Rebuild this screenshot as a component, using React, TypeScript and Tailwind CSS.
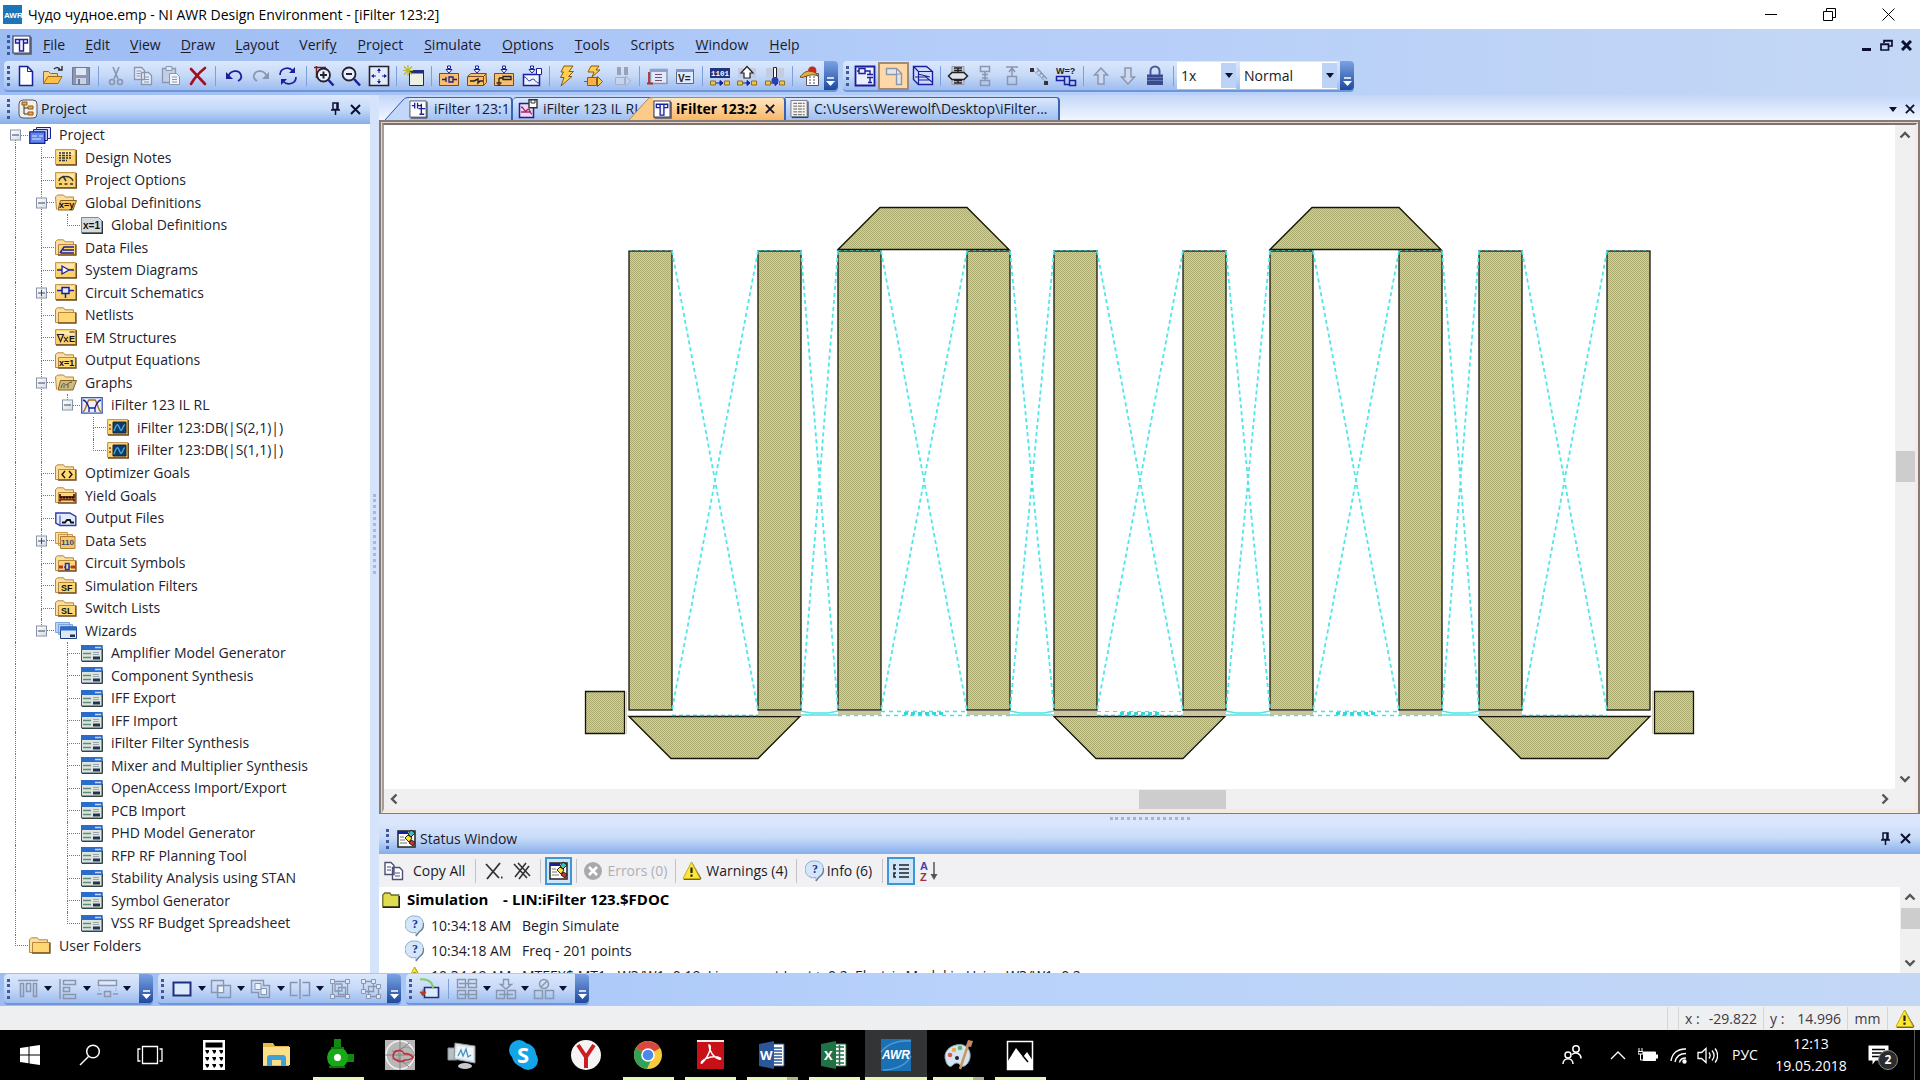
import React from "react";

type Kids = { children: React.ReactNode };

const navy = "#1a1f9c";
const gray = "#8a96ae";

/* ---------- generic svg frame for 22x22 toolbar glyphs ---------- */
function G({ children, w = 22, h = 22 }: Kids & { w?: number; h?: number }) {
  return (
    <svg width={w} height={h} viewBox={`0 0 ${w} ${h}`} fill="none" className="shrink-0" aria-hidden="true">
      {children}
    </svg>
  );
}

const DownMark = () => <path d="M11 8 8 4.500h6zM9.500 1h3v2.500h-3z" fill="#fff" stroke={navy} strokeWidth="1" />;
const Cells = () => (
  <>
    <path d="M1.500 16h5v4h-5zM15.500 16h5v4h-5z" fill="#f5c24a" stroke="#8a7020" />
    <path d="M7 18h6M11 15.500l3 2.500-3 2.500z" stroke={navy} fill={navy} />
  </>
);

const icon = {
  newDoc: <G><path d="M4.500 1.500h8l5 5v14h-13z" fill="#fff" stroke={navy} strokeWidth="1.500" /><path d="M12.500 1.500v5h5" stroke={navy} /></G>,
  open: <G><path d="M1.500 18.500v-12h5l2 2h7v3" fill="#f8d27a" stroke="#9a6a1a" /><path d="M1.500 18.500 6 11.500h14l-4 7z" fill="#ffc04a" stroke="#9a6a1a" /><path d="M12 4c2-2 5-2 6 1M16 5h4V1" stroke="#222" strokeWidth="1.300" /></G>,
  save: <G><path d="M2.500 2.500h17v17h-17z" fill="#8a96b4" stroke="#6c7896" /><path d="M6 3h10v7H6z" fill="#dfe6f4" /><path d="M6 13h10v6H6z" fill="#c8d2e6" /><path d="M8 14h2v5H8z" fill="#6c7896" /></G>,
  cut: <G><path d="M8 2 13 14M14 2 9 14" stroke={gray} strokeWidth="1.600" /><circle cx="7" cy="17" r="2.500" stroke={gray} strokeWidth="1.600" /><circle cx="15" cy="17" r="2.500" stroke={gray} strokeWidth="1.600" /></G>,
  copy: <G><path d="M2.500 2.500h7l3 3v9h-10zM9.500 7.500h7l3 3v9h-10z" fill="#e3eafa" stroke={gray} strokeWidth="1.300" /><path d="M4.500 6h5M4.500 8.500h4M4.500 11h4M12 12h5M12 14.500h5M12 17h5" stroke={gray} /></G>,
  paste: <G><path d="M2.500 3.500h13v14h-13z" fill="#c5cfe4" stroke={gray} strokeWidth="1.300" /><path d="M6 1.500h6v4H6z" fill="#dfe6f4" stroke={gray} /><path d="M9.500 8.500h7l3 3v8h-10z" fill="#eef3fc" stroke={gray} /><path d="M12 12h5M12 14.500h5M12 17h5" stroke={gray} /></G>,
  del: <G><path d="M4 4l14 15M18 3C13 7 8 12 4 19" stroke="#a01020" strokeWidth="2.600" strokeLinecap="round" /></G>,
  undo: <G><path d="M5 12C7 5 16 4 18 10c1 3-1 5-3 6" stroke={navy} strokeWidth="1.800" /><path d="M3 7v7h7z" fill={navy} /></G>,
  redo: <G><path d="M17 12C15 5 6 4 4 10c-1 3 1 5 3 6" stroke={gray} strokeWidth="1.800" /><path d="M19 7v7h-7z" fill={gray} /></G>,
  refresh: <G><path d="M3 10c0-7 9-9 13-4M19 12c0 7-9 9-13 4" stroke={navy} strokeWidth="1.700" /><path d="M18 2v6h-6zM4 20v-6h6z" fill={navy} /></G>,
  zoomIn: <G><path d="M1 2.500h12M3.500 1v12" stroke="#7a2020" strokeWidth="1.500" /><circle cx="10.500" cy="10" r="6.500" fill="#e9f0fc" stroke="#223" strokeWidth="1.800" /><path d="M7 10h7M10.500 6.500v7" stroke="#223" strokeWidth="2" /><path d="m15.500 15 5 5.500" stroke={navy} strokeWidth="2.500" /></G>,
  zoomOut: <G><circle cx="9" cy="9" r="6.500" fill="#e9f0fc" stroke="#223" strokeWidth="1.800" /><path d="M6 9h6" stroke="#223" strokeWidth="2" /><path d="m14 14 6 6.500" stroke={navy} strokeWidth="2.500" /></G>,
  fit: <G><path d="M1.500 1.500h19v19h-19z" fill="#e3ecfb" stroke="#223" strokeWidth="1.600" /><path d="M11 4v4M11 14v4M4 11h4M14 11h4" stroke={navy} /><path d="M9 6l2-3 2 3zM9 16l2 3 2-3zM6 9l-3 2 3 2zM16 9l3 2-3 2z" fill={navy} /></G>,
  newWin: <G><path d="M6.500 5.500h14v15h-14z" fill="#eef0e4" stroke={navy} /><path d="M6 5h15v3.500H6z" fill="#20307c" /><path d="M5 0v11M0 5.500h10M1 1.500l8 8M9 1.500l-8 8" stroke="#b8b828" strokeWidth="1.200" /></G>,
  addSch: <G><DownMark /><path d="M1.500 8.500h19v12h-19z" fill="#fbbf6a" stroke="#7a4a18" /><path d="M4 14.500h4M8 12v5M11 12h4v5h-4zM15 14.500h4" stroke={navy} strokeWidth="1.300" /></G>,
  addSys: <G><DownMark /><path d="M1.500 11.500 5 8.500h15l.5 9-3 3h-16z" fill="#fbbf6a" stroke="#7a4a18" /><path d="M2 11.500h15.500v9M17.500 11.500l3-3" stroke="#7a4a18" /><path d="M4 16h4l4-2v4l2-2h3" stroke="#222" strokeWidth="1.400" /></G>,
  addEm: <G><DownMark /><path d="M1.500 8.500h19v12h-19z" fill="#fbbf6a" stroke="#7a4a18" /><path d="M6 13v5M3.500 18h5M4.500 20h3M6 13h4M10 11.500h8v3h-8z" stroke="#222" strokeWidth="1.300" /></G>,
  addGraph: <G><DownMark /><path d="M2.500 9.500h16v11h-16z" fill="#eef3fc" stroke={navy} strokeWidth="1.500" /><path d="M3 12c4 0 3 6 7 3s4 3 8 3" stroke={navy} /><path d="M15.500 3.500h5v6h-5z" fill="#fff" stroke={navy} /></G>,
  bolt: <G><path d="M8 1h9l-4 5.500h4.500l-5 5H16L5 21l3-8.500H4.500L7.500 7H5z" fill="#ffcf52" stroke="#8a5a10" /></G>,
  boltRun: <G><path d="M8 1h8l-3 4h4l-8 7 2-5H5z" fill="#ffcf52" stroke="#8a5a10" /><path d="M4.500 12.500h9v8h-9z" fill="#fbb04a" stroke="#8a5a10" /><path d="m14.500 11.500 5 5-5 5zM1 16.500h3" fill="#ffc84a" stroke="#8a5a10" /></G>,
  boltPause: <G><path d="M6 2h4v8H6zM13 2h4v8h-4z" fill="#98a2b8" /><path d="M4.500 12.500h9v7h-9zM14.500 11l5 5-5 5z" fill="#c6d3ec" stroke="#a4b0c8" /></G>,
  probe: <G><path d="M4.500 4.500h16.500v14h-16.500z" fill="#dfe9fb" stroke={gray} strokeWidth="1.500" /><path d="M4 4h17v3H4z" fill="#8ba2d4" /><path d="M9 9.500h7M9 12.500h7M9 15.500h7" stroke="#7a5060" /><path d="M1 18.500h6M3 7v12" stroke="#b03030" strokeWidth="1.800" /></G>,
  veq: <G><path d="M2.500 4.500h17v14h-17z" fill="#dfe9fb" stroke="#5a6a94" /><path d="M2 4h17v3H2z" fill="#7d98d0" /><text x="4" y="16.500" fontSize="10" fontFamily="Liberation Sans" fontWeight="700" fill="#222">V=</text></G>,
  bits: <G><path d="M1 3h20v10H1z" fill="#22347c" /><text x="2" y="11" fontSize="7.500" fontFamily="Liberation Mono" fontWeight="700" fill="#fff">1101</text><Cells /></G>,
  upArr: <G><path d="M2 3h18v10H2z" fill="#c3cce0" /><path d="M11 1.500 5 8h3v5h6V8h3z" fill="#fff" stroke="#222" strokeWidth="1.200" /><Cells /></G>,
  thermo: <G><path d="M2 3h18v10H2z" fill="#c3cce0" /><Cells /><path d="M9.500 2.500h3v10h-3z" fill="#fff" stroke="#222" /><circle cx="11" cy="15.500" r="3.500" fill="#2840b4" /></G>,
  calHat: <G><path d="M7.500 8.500h12v12h-12z" fill="#fff" stroke="#556" /><path d="M10 12h2M14 12h2M10 15h2M14 15h2M10 18h2M14 18h2" stroke="#889" strokeWidth="1.500" /><path d="M1 12c3-4 6-6 10-6s6 2 8 5c-5-2-8-1-11 0s-5 2-7 1z" fill="#e0b040" stroke="#6a4a10" /><path d="M9 6c0-3 2-5 5-4.500S18 5 17 8z" fill="#c42a20" /></G>,
  lay2d: <G><path d="M1.500 1.500h19v19h-19z" fill="#e9effc" stroke={navy} strokeWidth="1.800" /><path d="M3 6h2M5 3.500h6v5H5zM11 6h5v3M13 9.500h6M13 12.500h6M16 12.500v5M14 17.500h4" stroke={navy} strokeWidth="1.400" /></G>,
  view2d: <G><path d="M3.500 3.500h10l5 5v11h-5v-10h-10z" fill="#e6e4e2" stroke={gray} strokeWidth="1.400" /><path d="M13.500 3.500v6M13.500 9.500l5-1" stroke={gray} /></G>,
  view3d: <G><path d="M1.500 1.500h13l6 5v13h-14l-5-5z" fill="#cfdcf8" stroke={navy} strokeWidth="1.400" /><path d="M1.500 1.500l5 5v13M6.500 6.500h14M3 12h11l6 5M6 15h12M6 9l12 3" stroke={navy} strokeWidth="1.200" /></G>,
  cutPlane: <G><path d="M5 1.500h12v18H5z" fill="#c6ccd8" stroke="#99a" /><path d="M7 3h8M11 3v5M7 5.500h8M7 15.500h8M11 14v4M7 18h8" stroke="#222" strokeWidth="1.400" /><path d="M1.500 11 5 7.500h12l3.500 3.500-3.500 3.500H5z" fill="#dfe4ec" stroke="#222" strokeWidth="1.500" /></G>,
  spread: <G><path d="M6.500 1.500h9v5h-9zM6.500 15.500h9v5h-9zM11 7v8M8 9.500h6M8 13h6" stroke={gray} strokeWidth="1.500" /></G>,
  rise: <G><path d="M6.500 11.500h9v8h-9zM5 2h12M11 3v8M8 7l3-4 3 4" stroke={gray} strokeWidth="1.500" /></G>,
  ruler: <G><path d="M2 3h4v4H2zM16 16h4v4h-4z" fill="#333" /><path d="M6 6l11 10" stroke={gray} strokeDasharray="1 1" strokeWidth="1.500" /><path d="m9 3 10 11M11 5 9 7M13.500 8l-2 2M16 11l-2 2" stroke={gray} strokeWidth="1.300" /></G>,
  weq: <G><text x="1" y="9" fontSize="9" fontFamily="Liberation Sans" fontWeight="700" fill="#222">W=?</text><path d="M1.500 11.500h8v4h-8zM9.500 11.500h5v8h-5zM14.500 15.500h6v5h-6z" stroke={navy} strokeWidth="1.500" /></G>,
  up: <G><path d="M11 3 4.500 10H8v9h6v-9h3.500z" fill="#cdd9f0" stroke={gray} strokeWidth="1.500" /></G>,
  down: <G><path d="M11 19 4.500 12H8V3h6v9h3.500z" fill="#cdd9f0" stroke={gray} strokeWidth="1.500" /></G>,
  lock: <G><path d="M6.500 10V6a4.500 4.500 0 0 1 9 0v4" stroke="#4a5a94" strokeWidth="2" /><path d="M3 9.500h16V20H3z" fill="#3b4b90" /><path d="M3 12.500h16M3 15.500h16" stroke="#6676b0" /></G>,
  alignTop: <G><path d="M1 2.500h20M3.500 5.500h3v13h-3zM9.500 5.500h4v8h-4zM16.500 5.500h3v13h-3z" stroke={gray} strokeWidth="1.600" /></G>,
  alignLeft: <G><path d="M3 1v20M6.500 2.500h12v4h-12zM6.500 9.500h6v4h-6zM6.500 16.500h12v4h-12z" stroke={gray} strokeWidth="1.500" /></G>,
  distrib: <G><path d="M2.500 2.500h18v5h-18z" fill="#dfe9fb" stroke={gray} strokeWidth="1.500" /><path d="M8.500 13.500h6v5h-6zM1 16h5M17 16h5" stroke={gray} strokeWidth="1.500" /><path d="M3 10v3M20 10v3" stroke={gray} strokeDasharray="1 1" /></G>,
  rect: <G><path d="M2.500 4.500h17v13h-17z" fill="#dcebfb" stroke="#20307c" strokeWidth="2" /></G>,
  overlap: <G><path d="M1.500 2.500h12v12h-12zM7.500 7.500h13v12h-13z" stroke={gray} strokeWidth="1.400" /><path d="M8 8h5.500v6.500H8z" fill="#eef4fe" stroke={gray} /></G>,
  union: <G><path d="M1.500 2.500h12v5h6v12h-11v-5h-7z" stroke={gray} strokeWidth="1.400" /><path d="M5 5.500h6v6H5zM11 10.500h5.500v6H11z" fill="#eef4fe" stroke={gray} /></G>,
  mirror: <G><path d="M8.500 4.500h-7v13h7M13.500 4.500h7v13h-7M11 1v20" stroke={gray} strokeWidth="1.500" /></G>,
  group: <G><path d="M3.500 3.500h15v15h-15zM6 6h7v7H6zM9.500 9.500h7v7h-7z" stroke={gray} strokeWidth="1.300" /><path d="M1.500 1.500h4v4h-4zM16.500 1.500h4v4h-4zM1.500 16.500h4v4h-4zM16.500 16.500h4v4h-4z" fill="#dfe9fb" stroke={gray} /></G>,
  ungroup: <G><path d="M3.500 3.500h10v10h-10zM8.500 8.500h10v10h-10z" stroke={gray} strokeWidth="1.300" /><path d="M1.500 1.500h4v4h-4zM11.500 1.500h4v4h-4zM1.500 11.500h4v4h-4zM16.500 6.500h4v4h-4zM6.500 16.500h4v4h-4zM16.500 16.500h4v4h-4z" fill="#dfe9fb" stroke={gray} /></G>,
  rotate: <G><path d="M6.500 9.500h14v10h-14z" fill="#dcebfb" stroke="#20307c" strokeWidth="1.600" /><path d="M2 1.500c8-1 13 3 13 9" stroke="#7ccf60" strokeWidth="2" /><path d="M2 14h6l-3 4z" fill="#b04020" stroke="#b04020" /><path d="M5 11v4" stroke="#b04020" /></G>,
  array: <G><path d="M1.500 1.500h8v8h-8zM12.500 1.500h8v8h-8zM1.500 12.500h8v8h-8zM12.500 12.500h8v8h-8zM3 5.500h17M3 16.500h17" stroke={gray} strokeWidth="1.400" /></G>,
  snap: <G><path d="M8.500 1.500h5v5h3L11 11 5.500 6.500h3zM1.500 12.500h8v8h-8zM12.500 12.500h8v8h-8zM4 16.500h14" stroke={gray} strokeWidth="1.400" /></G>,
  noSnap: <G><circle cx="11" cy="6" r="4.500" stroke={gray} strokeWidth="1.600" /><path d="M8 9l6-6M1.500 12.500h8v8h-8zM12.500 12.500h8v8h-8z" stroke={gray} strokeWidth="1.500" /></G>,
};

/* ---------- toolbar pieces ---------- */
function Grip() {
  return (
    <span className="flex w-2 shrink-0 items-center justify-center self-stretch">
      <span className="h-5 border-l-[3px] border-dotted border-[#40599a]" />
    </span>
  );
}
const Sep = () => <span className="flex w-2 shrink-0 justify-center"><span className="h-5 w-px bg-[#7d9fdc]" /></span>;
const Caret = () => (
  <svg width="8" height="5" viewBox="0 0 8 5" aria-hidden="true" className="shrink-0"><path d="M0 0h8L4 5z" fill="#0c1030" /></svg>
);
function Overflow() {
  return (
    <button aria-label="Toolbar options" className="flex w-[14px] shrink-0 flex-col items-center justify-end self-stretch rounded-r bg-gradient-to-b from-[#7ba2e4] to-[#1e4a9e] pb-1">
      <svg width="9" height="9" viewBox="0 0 9 9" aria-hidden="true"><path d="M1 1h7" stroke="#fff" strokeWidth="1.500" /><path d="M0 4h9L4.500 9z" fill="#fff" /></svg>
    </button>
  );
}
function Tool({ name, children, on }: Kids & { name: string; on?: boolean }) {
  return (
    <button
      aria-label={name}
      title={name}
      className={
        on
          ? "flex h-[28px] min-w-0 flex-1 items-center justify-center border-2 border-[#a08a78] bg-[#ffd8a8]"
          : "flex h-[28px] min-w-0 flex-1 items-center justify-center"
      }
    >
      {children}
    </button>
  );
}
function Bar({ children, className }: Kids & { className: string }) {
  return (
    <div role="toolbar" className={`flex h-[31px] shrink-0 items-center rounded border-b-2 border-[#6f96d8] bg-gradient-to-b from-[#dbe8fd] via-[#c6d9f8] to-[#9dbcf0] ${className}`}>
      {children}
    </div>
  );
}
function DropDown({ label, value, className }: { label: string; value: string; className: string }) {
  return (
    <div className={`flex h-[27px] shrink-0 bg-white ${className}`}>
      <select aria-label={label} defaultValue={value} className="h-full min-w-0 flex-1 appearance-none bg-transparent pl-1 text-sm text-[#181828] outline-none">
        <option>{value}</option>
      </select>
      <span className="my-px flex w-[15px] items-center justify-center bg-[#bcd2f6]"><Caret /></span>
    </div>
  );
}

/* ---------- menu ---------- */
const menus: [string, number][] = [
  ["File", 0], ["Edit", 0], ["View", 0], ["Draw", 0], ["Layout", 0], ["Verify", 5], ["Project", 0],
  ["Simulate", 0], ["Options", 0], ["Tools", 0], ["Scripts", -1], ["Window", 0], ["Help", 0],
];

const LayoutDoc = ({ s = 20 }: { s?: number }) => (
  <svg width={s} height={s} viewBox="0 0 20 20" fill="none" aria-hidden="true" className="shrink-0">
    <path d="M1 1h17v17H1z" fill="#fff" stroke="#33406c" strokeWidth="1.200" />
    <path d="M19 2v17H2" stroke="#556" strokeWidth="1.500" />
    <path d="M3.500 4.500h12v3.500h-4v8h-4V8h-4zM7.500 5v3M11.500 5v3" stroke={navy} strokeWidth="1.400" fill="#eef2ff" />
  </svg>
);

/* ---------- tree ---------- */
const TI = ({ children }: Kids) => (
  <svg width="22" height="17" viewBox="0 0 22 17" fill="none" className="shrink-0" aria-hidden="true">{children}</svg>
);
const Card = ({ children, fill = "#fbd36e" }: { children?: React.ReactNode; fill?: string }) => (
  <TI>
    <path d="M.5.5h20v15H.5z" fill={fill} stroke="#c89a50" />
    <path d="M1 16h20.500V1" stroke="#6a4a20" strokeWidth="1.400" />
    <path d="M2 2h17v4H2z" fill="#fff" opacity=".45" />
    {children}
  </TI>
);
const Fold = ({ children }: { children?: React.ReactNode }) => (
  <TI>
    <path d="M.5 15.500V2.500L2.500.8h6L10 2.800h8.500v12.700z" fill="#f9dfa0" stroke="#b8863c" />
    <path d="M3.500 15.500v-10h17v10z" fill="#ffd873" stroke="#b8863c" />
    <path d="M3 16.200h18V5.500" stroke="#6a4a20" strokeWidth="1.300" />
    {children}
  </TI>
);
const OpenFold = ({ children, tone = "#f6c95a" }: { children?: React.ReactNode; tone?: string }) => (
  <TI>
    <path d="M1.500 15.500.5 3l2-2h6l2 2h8v3" fill="#f9dfa0" stroke="#b8863c" />
    <path d="M3 16 5.500 6.500h16L18 16z" fill={tone} stroke="#8a5f24" />
    {children}
  </TI>
);
const T = ({ x, y = 13, s = 9, children, fill = "#111" }: Kids & { x: number; y?: number; s?: number; fill?: string }) => (
  <text x={x} y={y} fontSize={s} fontFamily="Liberation Sans" fontWeight="700" fill={fill}>{children}</text>
);
const WizIcon = () => (
  <TI>
    <path d="M.5.5h20.500v15.500H.5z" fill="#dfe4dc" stroke="#33507c" />
    <path d="M0 0h21.500v5H0z" fill="#2a6ccc" />
    <path d="M14 2.500h6" stroke="#bcd8ff" strokeWidth="1.500" />
    <path d="M2 8.500h8M2 12.500h8" stroke="#5c8a7c" strokeWidth="1.500" />
    <path d="M12 7.500h6M12 9.500h6" stroke="#99a5b0" />
    <path d="M12 11.500h7v3h-7z" fill="#22344c" />
    <path d="M21.500 4v12.500H1" stroke="#344" />
  </TI>
);
const MeasIcon = () => (
  <Card>
    <path d="M6 3h13v11H6z" fill="#123a6c" stroke="#222" />
    <path d="M7 12c3-9 4-7 6-2s3-5 5-4" stroke="#3fb0e0" strokeWidth="1.300" />
    <path d="M3 5v2M3 9v2" stroke="#a04020" strokeWidth="1.500" />
  </Card>
);

type Node = { label: string; icon: React.ReactNode; box?: "+" | "-"; kids?: Node[] };

const wizards = [
  "Amplifier Model Generator", "Component Synthesis", "IFF Export", "IFF Import", "iFilter Filter Synthesis",
  "Mixer and Multiplier Synthesis", "OpenAccess Import/Export", "PCB Import", "PHD Model Generator",
  "RFP RF Planning Tool", "Stability Analysis using STAN", "Symbol Generator", "VSS RF Budget Spreadsheet",
];

const tree: Node[] = [
  {
    label: "Project", box: "-",
    icon: <TI><path d="M7.500.5h14v11h-14z" fill="#dfe6fb" stroke={navy} /><path d="M4.500 2.500h14v11h-14z" fill="#bccbf6" stroke={navy} /><path d="M.8 4.800h15v11.500H.8z" fill="#5f86ea" stroke={navy} strokeWidth="1.300" /><path d="M3 9h5M3 12h9M10 9h4" stroke="#dfe8ff" /></TI>,
    kids: [
      { label: "Design Notes", icon: <Card><path d="M4 4h12M4 6.500h12M4 9h12M4 11.500h8" stroke="#333" strokeWidth="1.300" strokeDasharray="2 1 3 1" /></Card> },
      { label: "Project Options", icon: <Card><path d="M4 9c1-6 12-6 14 0" stroke="#333" strokeWidth="1.300" /><path d="M11 9 8 4M4 12h3M9.500 12h3M15 12h3" stroke="#333" strokeWidth="1.500" /></Card> },
      { label: "Global Definitions", box: "-", icon: <OpenFold><T x={4} y={14}>x=y</T></OpenFold>, kids: [
        { label: "Global Definitions", icon: <TI><path d="M.5.5h17l3.500 3.500v12H.5z" fill="#d6dade" stroke="#888" /><path d="M1 16.200h20.500V4" stroke="#333" strokeWidth="1.400" /><T x={2} y={12} s={10}>x=1</T></TI> },
      ] },
      { label: "Data Files", icon: <Fold><path d="M5 14 9 8h10M8 11h11M6 14h13" stroke={navy} strokeWidth="1.500" /></Fold> },
      { label: "System Diagrams", icon: <Card><path d="M2 8h5M7 4v8l7-4zM14 8h5" stroke={navy} strokeWidth="1.300" fill="#fff" /></Card> },
      { label: "Circuit Schematics", box: "+", icon: <Card><path d="M2 6.500h5M14 6.500h5M7 3.500h7v6H7zM10.500 9.500V14" stroke={navy} strokeWidth="1.500" fill="#dfe8ff" /></Card> },
      { label: "Netlists", icon: <Fold /> },
      { label: "EM Structures", icon: <Card><path d="M2.500 5.500h6l-3 7z" stroke="#222" strokeWidth="1.200" /><path d="m9 8 4 5M13 8l-4 5M14.500 3h5" stroke="#222" strokeWidth="1.200" /><T x={14} y={13} s={9}>E</T></Card> },
      { label: "Output Equations", icon: <Fold><T x={4} y={14}>x=1</T></Fold> },
      { label: "Graphs", box: "-", icon: <OpenFold tone="#cdbb7c"><path d="M6 14c2-8 4-3 5-3s3-3 6-3M9 14v-3M13 14v-4" stroke="#555" /></OpenFold>, kids: [
        { label: "iFilter 123 IL RL", box: "-", icon: <TI><path d="M.7.700h20.500v15.500H.7z" fill="#eaf0fd" stroke="#3c58b4" strokeWidth="1.300" /><path d="M2 15C5 13 6 4 8 3h6c2 1 3 10 6 12" stroke="#a8701c" strokeWidth="1.400" /><path d="M2 3c4 1 5 5 6 8v4M20 3c-4 1-5 5-6 8v4M8 11h6" stroke={navy} strokeWidth="1.300" /></TI>, kids: [
          { label: "iFilter 123:DB(|S(2,1)|)", icon: <MeasIcon /> },
          { label: "iFilter 123:DB(|S(1,1)|)", icon: <MeasIcon /> },
        ] },
      ] },
      { label: "Optimizer Goals", icon: <Fold><path d="m10 7-3 3.500 3 3.500M14 7l3 3.500-3 3.500" stroke="#111" strokeWidth="1.300" /></Fold> },
      { label: "Yield Goals", icon: <Fold><path d="M5 7v3h14V7M5 14.500v-2h14v2" stroke="#7a2a10" strokeWidth="2" /><path d="M5 10.500h14" stroke="#111" strokeWidth="2" strokeDasharray="2 1" /></Fold> },
      { label: "Output Files", icon: <TI><path d="M.8 13V3h14l6 3.500v9H5z" fill="#e3ebfd" stroke="#2a3fa8" strokeWidth="1.400" /><path d="M7 12.500h3l2-2.500h3l1 2.500h3" stroke="#111" strokeWidth="1.800" /><path d="M5 5.500v10" stroke="#2a3fa8" /></TI> },
      { label: "Data Sets", box: "+", icon: <TI><path d="M.5.5h12v11H.5zM3.500 2.500h14v11h-14z" fill="#fbe0a0" stroke="#c8944c" /><path d="M5.500 4.500h14.500v12H5.500z" fill="#f7c766" stroke="#b07a30" /><T x={6} y={13} s={8} fill="#2a4a7c">110</T></TI> },
      { label: "Circuit Symbols", icon: <Fold><path d="M4 10.500h4v3H4zM16 10.500h4v3h-4z" fill="#c03020" /><path d="M9 12h1.500M14 12h1.500M10.500 8.500h3.500v6h-3.500z" stroke="#2030c0" strokeWidth="1.500" /></Fold> },
      { label: "Simulation Filters", icon: <Fold><T x={6} y={14}>SF</T></Fold> },
      { label: "Switch Lists", icon: <Fold><T x={6} y={14}>SL</T></Fold> },
      { label: "Wizards", box: "-", icon: <TI><path d="M.5.5h14v10H.5zM3.500 2.500h14v10h-14z" fill="#b9d2f6" stroke="#7fa6dc" /><path d="M5.500 5h16v11.500h-16z" fill="#dfe8f4" stroke="#1d3f80" /><path d="M5 4.500h16.500v4H5z" fill="#2a6ccc" /><path d="M15 12.500h5v2.500h-5z" fill="#22344c" /></TI>,
        kids: wizards.map((label) => ({ label, icon: <WizIcon /> })) },
    ],
  },
  { label: "User Folders", icon: <Fold /> },
];

type Row = { node: Node; guides: boolean[]; first: boolean; last: boolean };
function flatten(nodes: Node[], guides: boolean[], out: Row[]): Row[] {
  nodes.forEach((node, i) => {
    const last = i === nodes.length - 1;
    out.push({ node, guides, first: i === 0 && guides.length === 0, last });
    if (node.kids) flatten(node.kids, [...guides, !last], out);
  });
  return out;
}
const rows = flatten(tree, [], []);

function TreeRow({ node, guides, first, last }: Row) {
  return (
    <li className="flex min-h-0 flex-1 items-center">
      {guides.map((g, i) => (
        <span key={i} className="flex w-[26px] shrink-0 self-stretch pl-[13px]">
          {g && <span className="border-l border-dotted border-[#777]" />}
        </span>
      ))}
      <span className="relative flex w-[26px] shrink-0 flex-col self-stretch pl-[13px]">
        <span className={first ? "flex-1 border-b border-dotted border-[#777]" : "flex-1 border-b border-l border-dotted border-[#777]"} />
        <span className={last ? "flex-1" : "flex-1 border-l border-dotted border-[#777]"} />
        {node.box && (
          <button
            aria-label={`${node.box === "-" ? "Collapse" : "Expand"} ${node.label}`}
            className="absolute top-1/2 left-2 flex h-[11px] w-[11px] -translate-y-1/2 items-center justify-center border border-[#8793a5] bg-gradient-to-br from-white to-[#d8dde4]"
          >
            <svg width="7" height="7" viewBox="0 0 7 7" aria-hidden="true"><path d={node.box === "-" ? "M0 3.500h7" : "M0 3.500h7M3.500 0v7"} stroke="#3a4660" /></svg>
          </button>
        )}
      </span>
      <span className="flex items-center gap-2 pl-px">
        {node.icon}
        <span className="text-sm leading-5 whitespace-nowrap text-[#222230]">{node.label}</span>
      </span>
    </li>
  );
}

const Pin = () => (
  <svg width="11" height="14" viewBox="0 0 11 14" fill="none" aria-hidden="true"><path d="M3 1h5v6.500H3zM7 1v6.500M1 8h9M5.500 8v5" stroke="#0c1030" strokeWidth="1.500" /></svg>
);
const Cross = ({ s = 11, w = 2 }: { s?: number; w?: number }) => (
  <svg width={s} height={s} viewBox="0 0 11 11" fill="none" aria-hidden="true"><path d="m1 1 9 9M10 1l-9 9" stroke="#0c1030" strokeWidth={w} /></svg>
);

/* ---------- layout view ---------- */
const columns: [number, number][] = [
  [629, 672], [758, 801], [838, 881], [967, 1010], [1054, 1097], [1183, 1226], [1270, 1313], [1399, 1442], [1479, 1522], [1607, 1650],
];
function FilterLayout() {
  return (
    <svg viewBox="384 125 1511 664" className="h-full w-full" fill="none" role="img" aria-label="iFilter 123 layout">
      <defs>
        <pattern id="metal" width="2" height="2" patternUnits="userSpaceOnUse">
          <path d="M0 0h2v2H0z" fill="#d2d192" />
          <path d="M0 0h1v1H0zM1 1h1v1H1z" fill="#adac70" />
        </pattern>
      </defs>
      <g fill="url(#metal)" stroke="#15150c" strokeWidth="1.300">
        <path d="M585.500 691.500h39v42h-39zM1654.500 691.500h39v42h-39z" />
        {columns.map(([a, b]) => <rect key={a} x={a} y={251} width={b - a} height={459} />)}
        {[838, 1270].map((x) => <path key={x} d={`M${x} 249.500l42-42h87l42 42z`} />)}
        {[629, 1054, 1479].map((x) => <path key={x} d={`M${x} 716.500l42 42h87l42-42z`} />)}
      </g>
      <path d="M626.500 691v43M1652.500 691v43" stroke="#d9d2bd" />
      {columns.map(([a, b], i) => i > 0 && i < 9 && <path key={a} d={`M${a} 713h${b - a}`} stroke="#cfc4a0" strokeWidth="4" />)}
      {columns.slice(0, -1).map(([, b], i) => {
        const n = columns[i + 1][0];
        return <path key={b} d={`M${b} 251 ${n} 710M${n} 251 ${b} 710`} stroke="#4fe6e8" strokeWidth="1.800" strokeDasharray="4 3" />;
      })}
      {columns.map(([a, b]) => <path key={a} d={`M${a} 250.500h${b - a}`} stroke="#3fa9a0" strokeDasharray="3 3" />)}
      {[[672, 758], [1097, 1183], [1522, 1607]].map(([a, b]) => <path key={a} d={`M${a} 715.500h${b - a}`} stroke="#26b8b4" strokeWidth="1.500" strokeDasharray="4 3" />)}
      {[[801, 838], [1010, 1054], [1226, 1270], [1442, 1479]].map(([a, b]) => (
        <path key={a} d={`M${a} 715h${b - a}M${a} 711l10 2h${b - a - 20}l10-2`} stroke="#52e4e6" strokeWidth="1.500" />
      ))}
      {[[838, 1010], [1270, 1442]].map(([a, b]) => (
        <g key={a}>
          <path d={`M${a} 715.500h${b - a}M${a + 43} 711.500h86`} stroke="#4ddfe0" strokeWidth="1.300" strokeDasharray="4 4" />
          <path d={`M${a + 66} 713.500h40`} stroke="#34d6da" strokeWidth="3" strokeDasharray="4 3" />
        </g>
      ))}
      <path d="M1097 711.500h86" stroke="#4ddfe0" strokeDasharray="4 4" />
      <path d="M1120 713.500h40" stroke="#34d6da" strokeWidth="3" strokeDasharray="4 3" />
    </svg>
  );
}

const Chev = ({ d }: { d: string }) => (
  <svg width="12" height="12" viewBox="0 0 12 12" fill="none" aria-hidden="true"><path d={d} stroke="#555" strokeWidth="2.400" /></svg>
);
const chUp = "M1.500 8.500 6 4l4.500 4.500";
const chDown = "M1.500 3.500 6 8l4.500-4.500";
const chLeft = "M8.500 1.500 4 6l4.500 4.500";
const chRight = "M3.500 1.500 8 6l-4.500 4.500";

/* ---------- tabs ---------- */
function Slant({ active }: { active?: boolean }) {
  return (
    <svg width="24" height="23" viewBox="0 0 24 23" fill="none" aria-hidden="true" className="shrink-0">
      <path d="M0 23 18 3c2-2 3-2.500 6-2.500V23z" fill={active ? "#fccb8a" : "#c3d8f9"} />
      <path d="M0 23 18 3c2-2 3-2.500 6-2.500" stroke={active ? "#b08850" : "#2f57a8"} />
    </svg>
  );
}
const tabBase = "flex h-[23px] items-center rounded-tr border-t border-r-2 border-[#3a62b4] bg-gradient-to-b from-[#dbe8fd] to-[#9fc0f2] text-sm text-[#1a1a2c] whitespace-nowrap ";

const InfoMark = () => (
  <svg width="20" height="22" viewBox="0 0 20 22" fill="none" aria-hidden="true" className="shrink-0">
    <path d="M10 1a8.500 8.500 0 0 1 4 16L11 21v-3.500A8.500 8.500 0 1 1 10 1z" fill="#d3e6fa" stroke="#8fb0d4" />
    <path d="M18.400 8c.5 4-1 7-4.400 9L11 21" stroke="#6a8098" strokeWidth="1.300" />
    <text x="7" y="13" fontSize="12" fontWeight="700" fontFamily="Liberation Serif" fill="#1c2fa0">?</text>
  </svg>
);
const WarnMark = () => (
  <svg width="20" height="20" viewBox="0 0 20 20" fill="none" aria-hidden="true" className="shrink-0">
    <path d="M10 1 19.500 17.500 18 19H2L1 17.500z" fill="#6a6430" />
    <path d="M9.500 1 18 17.500H1z" fill="#ffe92e" stroke="#c8b01c" strokeLinejoin="round" />
    <path d="M9.500 6.500v5.500M9.500 13.500v2.200" stroke="#222" strokeWidth="2.200" />
  </svg>
);
const StatusGlyph = () => (
  <svg width="20" height="20" viewBox="0 0 20 20" fill="none" aria-hidden="true" className="shrink-0">
    <path d="M1 2h17v16H1z" fill="#fff" stroke="#222" strokeWidth="1.500" /><path d="M1 2h10v3H1z" fill={navy} />
    <path d="M3 8h4M3 11h5M3 14h7" stroke="#777" />
    <path d="m14 1 4 3-4 4-3-3z" fill="#3fc0b8" stroke="#222" /><path d="m11 6 4 3-3 4-4-4z" fill="#ffe13c" stroke="#222" /><path d="m14 11 4 2-2 4-4-3z" fill="#d03030" stroke="#222" />
  </svg>
);

/* ---------- taskbar ---------- */
const TB = ({ children }: Kids) => (
  <svg width="32" height="32" viewBox="0 0 32 32" fill="none" aria-hidden="true">{children}</svg>
);
const Office = ({ c, l, grid }: { c: string; l: string; grid?: boolean }) => (
  <TB>
    <path d="M15 5h13v22H15z" fill="#fff" stroke={c} />
    <path d={grid ? "M17 8h9M17 12h9M17 16h9M17 20h9M17 24h9M21.500 6v20" : "M18 9h8M18 12h8M18 15h8M18 18h8M18 21h8M18 24h8"} stroke={c} strokeWidth="1.500" />
    <path d="M3 5 18 2v28L3 27z" fill={c} />
    <text x={grid ? 6 : 4} y="21" fontSize="13" fontWeight="700" fontFamily="Open Sans" fill="#fff">{l}</text>
  </TB>
);
const apps: { name: string; line?: "full" | "split" | "active"; icon: React.ReactNode }[] = [
  { name: "Calculator", icon: <TB><path d="M5 1h22v30H5z" fill="#fff" /><path d="M7.500 3.500h17v5h-17z" fill="#000" /><path d="M7 11h4v2l-2 2zM14 11h4v2l-2 2zM21 11h4v2l-2 2zM7 18h4v2l-2 2zM14 18h4v2l-2 2zM21 18h4v2l-2 2zM7 25h4v2l-2 2zM14 25h4v2l-2 2zM21 25h4v2l-2 2z" fill="#000" /></TB> },
  { name: "File Explorer", icon: <TB><path d="M3 4h10l2 3h14v20H3z" fill="#e9b94c" /><path d="M3 8h27v18H3z" fill="#fbe08c" /><path d="M7 27V19c0-2 1-3 3-3h13c2 0 3 1 3 3v8h-5v-6h-9v6z" fill="#3fa0d8" /></TB> },
  { name: "Network client", line: "full", icon: <TB><path d="M12 0h7v9h-7zM23 15h9v8h-9z" fill="#128a12" /><circle cx="15.500" cy="18.500" r="10.500" fill="#18a818" /><path d="M9 9h13M7 28h16" stroke="#0c780c" strokeWidth="2" /><circle cx="15.500" cy="18.500" r="3.500" fill="#fff" /></TB> },
  { name: "Smith chart", icon: <TB><path d="M1 1h30v30H1z" fill="#b9b6b8" /><circle cx="16" cy="16" r="14" stroke="#f0f0f0" strokeWidth="1.500" /><circle cx="22" cy="16" r="8" stroke="#9a9698" /><path d="M1 16h30M16 1v30M25 4c-6 5-10 9-17 8M25 28c-6-5-10-9-17-8" stroke="#858183" /><path d="M9 18c0-8 10-8 11-3M9 18c2 4 8 6 12 3 4 0 7-1 8-3-3-3-6-4-9-3" stroke="#c42a34" strokeWidth="1.600" /></TB> },
  { name: "System monitor", icon: <TB><path d="M2 9h9v12H2z" fill="#b8c0c4" stroke="#8a9298" /><path d="m9 4 20 3v17L8 20z" fill="#dfe4e8" stroke="#8a9298" /><path d="m11 7 16 2v12l-17-3z" fill="#eef6fc" /><path d="M12 17l3-6 2 6 3-7 2 8 3-2" stroke="#4a90c0" strokeWidth="1.300" /><ellipse cx="19" cy="27" rx="7" ry="3" fill="#c3c9cc" /></TB> },
  { name: "Skype", icon: <TB><circle cx="11" cy="11" r="10" fill="#12a5e8" /><circle cx="20" cy="21" r="10" fill="#12a5e8" /><circle cx="16" cy="16" r="12" fill="#12a5e8" /><text x="9" y="24" fontSize="22" fontWeight="700" fontFamily="Open Sans" fill="#fff">S</text></TB> },
  { name: "Yandex", icon: <TB><circle cx="16" cy="16" r="15" fill="#f4f4f4" /><path d="M8 6 16 18 24 6M16 17v12" stroke="#c81e24" strokeWidth="4" /></TB> },
  { name: "Chrome", line: "full", icon: <TB><circle cx="16" cy="16" r="14" fill="#f6cb3c" /><path d="M16 16 3.900 9A14 14 0 0 1 28.100 9z" fill="#d8483c" /><path d="M16 16 3.900 9A14 14 0 0 0 15 30l4-9z" fill="#33a058" /><path d="M16 9h12.100l-3-4H16z" fill="#d8483c" /><circle cx="16" cy="16" r="6.800" fill="#fff" /><circle cx="16" cy="16" r="5.300" fill="#4a88ec" /></TB> },
  { name: "Acrobat Reader", line: "full", icon: <TB><path d="M3 1h27v29H3z" fill="#c81018" /><path d="M3 1h27v2H3z" fill="#eee" /><path d="M15 6c3 0 1 10-7 18-2 1 0-4 9-6 9-1 12 3 8 2-5-1-10-8-10-14z" stroke="#fff" strokeWidth="1.500" /></TB> },
  { name: "Word", line: "split", icon: <Office c="#2b579a" l="W" /> },
  { name: "Excel", line: "full", icon: <Office c="#207245" l="X" grid /> },
  { name: "AWR", line: "active", icon: <TB><path d="M1 0h30v32H1z" fill="#1a70b4" /><path d="M1 13C8 4 20 1 31 2M3 31c12 0 24-5 28-14" stroke="#4c9ad4" strokeWidth="1.500" /><text x="2" y="20" fontSize="12" fontStyle="italic" fontWeight="700" fontFamily="Liberation Sans" fill="#fff">AWR</text></TB> },
  { name: "Paint", line: "split", icon: <TB><path d="M3 19C2 10 12 4 21 6c9 3 9 15 3 20-5 4-6-2-9-2-4 0-5 5-8 3-3-2-3-5-4-8z" fill="#d4e4f0" stroke="#8aa0b4" /><circle cx="8" cy="16" r="2.300" fill="#e05848" /><circle cx="12" cy="11" r="2.300" fill="#f0b040" /><circle cx="18" cy="9" r="2.300" fill="#58b868" /><circle cx="15" cy="19" r="2" fill="#223" /><path d="M18 30 26 6" stroke="#c89860" strokeWidth="2.500" /><path d="m24 7 2-6 5 1-2 6z" fill="#c8886c" /></TB> },
  { name: "Photos", line: "full", icon: <TB><path d="M3.500 2.500h25v28h-25z" stroke="#fff" strokeWidth="1.500" /><path d="M4 22 12 9l7 9 4-5 6 9v9H4z" fill="#fff" /><path d="m19 17 5 6" stroke="#000" strokeWidth="1.500" /></TB> },
];

const logLines: { kind: "info" | "warn"; time: string; text: string }[] = [
  { kind: "info", time: "10:34:18 AM", text: "Begin Simulate" },
  { kind: "info", time: "10:34:18 AM", text: "Freq - 201 points" },
  { kind: "warn", time: "10:34:19 AM", text: "MTEEX$.MT1 - W3/W1=0.19. Linear port Lopt > 0.2. Electric Model in Using W3/W1=0.2" },
];

const SSep = () => <span className="mx-1 h-6 w-px shrink-0 bg-[#c4c4c8]" />;

export default function App() {
  return (
    <div className="flex h-screen w-full flex-col overflow-hidden bg-[#b9d0f8] font-['Open_Sans','Noto_Sans',sans-serif] text-sm text-[#1a1a2c]">
      {/* title bar */}
      <header className="flex h-[29px] shrink-0 items-center bg-white pl-[3px] text-black">
        <svg width="19" height="19" viewBox="0 0 19 19" aria-hidden="true"><path d="M0 0h19v19H0z" fill="#1a76b8" /><text x="1" y="12.500" fontSize="8" fontWeight="700" fontFamily="Liberation Sans" fill="#fff">AWR</text></svg>
        <h1 className="flex-1 pl-[6px] text-sm">Чудо чудное.emp - NI AWR Design Environment - [iFilter 123:2]</h1>
        <div className="flex">
          <button aria-label="Minimize" className="flex h-7 w-[58px] items-center justify-center"><svg width="12" height="12" viewBox="0 0 12 12"><path d="M0 5.500h12" stroke="#000" /></svg></button>
          <button aria-label="Restore" className="flex h-7 w-[58px] items-center justify-center"><svg width="13" height="13" viewBox="0 0 13 13" fill="none"><path d="M.5 3.500h9v9h-9zM3.500 3V.5h9v9H10" stroke="#000" /></svg></button>
          <button aria-label="Close" className="mr-[2px] flex h-7 w-[60px] items-center justify-center"><svg width="13" height="13" viewBox="0 0 13 13"><path d="m.5.5 12 12M12.500.5l-12 12" stroke="#000" /></svg></button>
        </div>
      </header>

      {/* menu and toolbars */}
      <div className="h-[66px] shrink-0 bg-gradient-to-r from-[#9dbcf3] via-[#b4cdf9] to-[#c4d7f5]">
        <nav className="flex h-8 items-center pl-1">
          <Grip />
          <LayoutDoc s={20} />
          <div className="flex flex-1 pl-[1px]">
            {menus.map(([m, u], i) => (
              <button key={m} className={i < 6 ? "px-[10px] text-sm" : "pr-[10px] pl-[11px] text-sm"}>
                {u < 0 ? m : <>{m.slice(0, u)}<span className="underline underline-offset-2">{m[u]}</span>{m.slice(u + 1)}</>}
              </button>
            ))}
          </div>
          <div className="flex items-center gap-2 pr-2">
            <button aria-label="Minimize document"><svg width="11" height="11" viewBox="0 0 11 11"><path d="M1 9.500h9" stroke="#0c1030" strokeWidth="3" /></svg></button>
            <button aria-label="Restore document"><svg width="13" height="12" viewBox="0 0 13 12" fill="none"><path d="M1 5h7.500v6H1zM4 4V1.500h8v5.500H9M1 5.500h7M4 2h8" stroke="#0c1030" strokeWidth="1.700" /></svg></button>
            <button aria-label="Close document"><Cross w={3} /></button>
          </div>
        </nav>
        <div className="flex gap-[5px] pl-1">
          <Bar className="w-[834px]">
            <Grip />
            <Tool name="New">{icon.newDoc}</Tool><Tool name="Open">{icon.open}</Tool><Tool name="Save">{icon.save}</Tool><Sep />
            <Tool name="Cut">{icon.cut}</Tool><Tool name="Copy">{icon.copy}</Tool><Tool name="Paste">{icon.paste}</Tool><Tool name="Delete">{icon.del}</Tool><Sep />
            <Tool name="Undo">{icon.undo}</Tool><Tool name="Redo">{icon.redo}</Tool><Tool name="Redraw">{icon.refresh}</Tool><Sep />
            <Tool name="Zoom in">{icon.zoomIn}</Tool><Tool name="Zoom out">{icon.zoomOut}</Tool><Tool name="View all">{icon.fit}</Tool><Sep />
            <Tool name="New window">{icon.newWin}</Tool><Sep />
            <Tool name="Add schematic">{icon.addSch}</Tool><Tool name="Add system diagram">{icon.addSys}</Tool><Tool name="Add EM structure">{icon.addEm}</Tool><Tool name="Add graph">{icon.addGraph}</Tool><Sep />
            <Tool name="Analyze">{icon.bolt}</Tool><Tool name="Run simulators">{icon.boltRun}</Tool><Tool name="Pause">{icon.boltPause}</Tool><Sep />
            <Tool name="Probe">{icon.probe}</Tool><Tool name="Variables">{icon.veq}</Tool><Sep />
            <Tool name="Data">{icon.bits}</Tool><Tool name="Optimize">{icon.upArr}</Tool><Tool name="Tune">{icon.thermo}</Tool><Sep />
            <Tool name="Scripts">{icon.calHat}</Tool>
            <Overflow />
          </Bar>
          <Bar className="w-[511px]">
            <Grip />
            <div className="flex min-w-0 flex-1 items-center">
              <Tool name="Schematic view">{icon.lay2d}</Tool><Tool name="2D layout" on>{icon.view2d}</Tool><Tool name="3D layout">{icon.view3d}</Tool><Sep />
              <Tool name="Cut plane">{icon.cutPlane}</Tool><Tool name="Spread">{icon.spread}</Tool><Tool name="Raise">{icon.rise}</Tool><Tool name="Measure">{icon.ruler}</Tool><Tool name="Width query">{icon.weq}</Tool><Sep />
              <Tool name="Up">{icon.up}</Tool><Tool name="Down">{icon.down}</Tool><Tool name="Lock">{icon.lock}</Tool><Sep />
            </div>
            <DropDown label="Scale" value="1x" className="mr-1 w-[59px]" />
            <DropDown label="Mode" value="Normal" className="mr-[3px] w-[97px]" />
            <Overflow />
          </Bar>
        </div>
      </div>

      {/* workspace */}
      <div className="flex min-h-0 flex-1">
        <aside className="flex w-[370px] shrink-0 flex-col bg-white">
          <div className="flex h-[29px] shrink-0 items-center bg-gradient-to-b from-[#dde8fd] via-[#c4d9f8] to-[#86aeea] pr-[9px] pb-px pl-1">
            <Grip />
            <svg width="20" height="20" viewBox="0 0 20 20" fill="none" aria-hidden="true" className="ml-[6px]"><rect x="1" y="1" width="18" height="18" rx="4" fill="#f3f0e8" stroke="#556" /><path d="M6 4v11M6 9h4M6 15h4" stroke="#333" /><path d="M4 3h5v3H4zM10 7h5v3h-5zM10 13h5v3h-5z" fill="#f0a848" stroke="#8a5a20" /></svg>
            <h2 className="flex-1 pl-[3px] text-sm">Project</h2>
            <button aria-label="Pin panel" className="mr-[9px]"><Pin /></button>
            <button aria-label="Close panel"><Cross /></button>
          </div>
          <ul className="flex min-h-0 flex-1 flex-col pb-4 pl-[2px]">
            {rows.map((r, i) => <TreeRow key={i} {...r} />)}
          </ul>
        </aside>
        <div className="flex w-[9px] shrink-0 items-center justify-center bg-[#d5e4fb]"><span className="h-20 border-l-[3px] border-dotted border-[#a6b9dc]" /></div>

        <main className="flex min-w-0 flex-1 flex-col">
          {/* document tabs */}
          <div className="flex h-[25px] shrink-0 items-end bg-gradient-to-b from-[#c3d6f8] to-[#f1f6ff] pl-[6px]">
            <Slant />
            <button className={tabBase + "w-[104px] gap-[6px]"}>
              <svg width="19" height="19" viewBox="0 0 20 20" fill="none" aria-hidden="true" className="shrink-0"><path d="M1 1h17v17H1z" fill="#fff" stroke="#556" /><path d="M19 2v17H2" stroke="#333" /><path d="M3 6h3M6 3v6M9 3v6M9 6h4M13 4v11M10 9h7M11 15h5" stroke={navy} strokeWidth="1.400" /></svg>
              iFilter 123:1
            </button>
            <button className={tabBase + "w-[140px] gap-[5px] rounded-tl border-r-0 pl-[5px]"}>
              <svg width="20" height="20" viewBox="0 0 20 20" fill="none" aria-hidden="true" className="shrink-0"><path d="M1.500 4.500h14v14h-14z" fill="#f3d8ec" stroke={navy} strokeWidth="1.500" /><path d="M3 8c3 0 3 6 6 3s3 4 5 4M3 13h10" stroke="#a02878" strokeWidth="1.300" /><path d="M11 .8h8v8h-8z" fill="#fff" stroke="#333" strokeWidth="1.400" /><path d="M13 1v3h4V1" stroke="#333" /></svg>
              <span>iFilter 123 IL RL</span>
            </button>
            <div className="z-10 -mr-px -ml-6 flex items-end">
              <Slant active />
              <div className="flex h-[23px] w-[133px] items-center rounded-tr border-t border-r-2 border-t-[#b08850] border-r-[#3a62b4] bg-gradient-to-b from-[#ffe6bf] to-[#f9b765]">
                <button className="flex items-center gap-1 text-sm font-bold whitespace-nowrap text-black"><LayoutDoc s={19} />iFilter 123:2</button>
                <button aria-label="Close tab" className="ml-2"><Cross s={10} /></button>
              </div>
            </div>
            <button className={tabBase + "w-[275px] gap-[5px] pl-[5px]"}>
              <svg width="19" height="20" viewBox="0 0 20 20" fill="none" aria-hidden="true" className="shrink-0"><path d="M1 1h17v17H1z" fill="#f4f4f0" stroke="#778" /><path d="M19 2v17H2" stroke="#333" /><path d="M3.500 4h12M3.500 7h12M3.500 10h12M3.500 13h12M3.500 16h12" stroke="#555" strokeDasharray="4 1" /></svg>
              <span>C:\Users\Werewolf\Desktop\iFilter...</span>
            </button>
            <div className="flex h-[22px] flex-1 items-center justify-end gap-2 pr-[5px]">
              <button aria-label="Tab list"><Caret /></button>
              <button aria-label="Close document"><Cross s={10} /></button>
            </div>
          </div>

          {/* drawing area */}
          <div className="flex min-h-0 flex-1 border-t-2 border-r-2 border-b border-l-2 border-[#857b78] bg-[#e2d4ca] pt-px pl-px">
            <div className="grid min-h-0 min-w-0 flex-1 grid-cols-[1fr_20px] grid-rows-[1fr_20px] border-t-2 border-r-[3px] border-b-4 border-l-2 border-t-[#7c7370] border-r-[#f6eae0] border-b-[#f6eae0] border-l-[#a89c94] bg-white">
              <div className="min-h-0 min-w-0 overflow-hidden bg-white"><FilterLayout /></div>
              <div className="flex flex-col items-center bg-[#f0f0f0] py-1">
                <Chev d={chUp} />
                <div className="flex-[312]" />
                <div className="h-[31px] w-[19px] bg-[#cdcdcd]" />
                <div className="flex-[293]" />
                <Chev d={chDown} />
              </div>
              <div className="flex items-center bg-[#f0f0f0] px-1">
                <Chev d={chLeft} />
                <div className="flex-[738]" />
                <div className="h-[19px] w-[87px] bg-[#cdcdcd]" />
                <div className="flex-[652]" />
                <Chev d={chRight} />
              </div>
              <div className="bg-[#f0f0f0]" />
            </div>
          </div>

          {/* status panel */}
          <section className="flex h-[159px] shrink-0 flex-col">
            <div className="flex h-2 shrink-0 items-center justify-center bg-[#dbe6fd]"><span className="w-20 border-t-[3px] border-dotted border-[#a6b4d0]" /></div>
            <div className="flex h-8 shrink-0 items-center bg-gradient-to-b from-[#dbe7fd] via-[#c8dbf8] to-[#86aeea] pt-px pr-[9px] pl-1">
              <Grip />
              <span className="w-[6px]" />
              <StatusGlyph />
              <h2 className="flex-1 pl-[3px] text-sm">Status Window</h2>
              <button aria-label="Pin panel" className="mr-[9px]"><Pin /></button>
              <button aria-label="Close panel"><Cross /></button>
            </div>
            <div className="flex h-[33px] shrink-0 items-center bg-[#f1f1f3] pl-1 text-sm">
              <button className="flex items-center gap-[9px]">
                <svg width="21" height="20" viewBox="0 0 21 20" fill="none" aria-hidden="true"><path d="M2 1.500h6l3 3v9H2zM9.500 6.500h7l3 3v9h-10z" fill="#fff" stroke="#4a5078" strokeWidth="1.400" /><path d="M4 6h4M4 9h4M12 12h5M12 15h5" stroke="#4a5078" /></svg>
                Copy All
              </button>
              <span className="w-[6px]" /><SSep />
              <button aria-label="Clear" className="px-[5px]"><svg width="18" height="18" viewBox="0 0 18 18" fill="none"><path d="m1 2 13 14M15 1 2 17M16 15.500h1.500" stroke="#333" strokeWidth="1.800" /></svg></button>
              <button aria-label="Clear all" className="px-[5px]"><svg width="18" height="18" viewBox="0 0 18 18" fill="none"><path d="m1 2 13 14M13 1 2 15M16 4 6 17M5 1l12 13" stroke="#333" strokeWidth="1.600" /></svg></button>
              <SSep />
              <button aria-label="Auto show" className="flex h-[28px] w-[27px] items-center justify-center border-2 border-[#3c96d8] bg-[#cfe6f8]"><StatusGlyph /></button>
              <SSep />
              <button disabled className="flex items-center gap-1 pl-[2px] text-[#b0b0b4]">
                <svg width="20" height="20" viewBox="0 0 20 20" fill="none" aria-hidden="true"><circle cx="10" cy="10" r="9" fill="#a9a9ab" /><path d="m6 6 8 8M14 6l-8 8" stroke="#fff" strokeWidth="2.500" /></svg>
                Errors (0)
              </button>
              <span className="w-1" /><SSep />
              <button className="flex items-center gap-1 pl-[2px]"><WarnMark />Warnings (4)</button>
              <span className="w-1" /><SSep />
              <button className="flex items-center gap-[2px] pl-1"><InfoMark />Info (6)</button>
              <span className="w-[6px]" /><SSep />
              <button aria-label="Group" className="flex h-[28px] w-[28px] items-center justify-center border-2 border-[#3c96d8] bg-[#cfe6f8]"><svg width="18" height="18" viewBox="0 0 18 18" fill="none"><path d="M4 3H2v4h2M4 11H2v4h2M7 3h10M7 7h10M7 11h10M7 15h10" stroke="#222" strokeWidth="1.600" /></svg></button>
              <button aria-label="Sort" className="pl-1"><svg width="20" height="22" viewBox="0 0 20 22" fill="none"><text x="1" y="10" fontSize="11" fontWeight="700" fontFamily="Liberation Sans" fill="#4a3cb0">A</text><text x="1" y="21" fontSize="11" fontWeight="700" fontFamily="Liberation Sans" fill="#a03040">Z</text><path d="M15 2v14" stroke="#555" strokeWidth="1.500" /><path d="M11.500 14h7L15 20z" fill="#555" /></svg></button>
            </div>
            <div className="flex min-h-0 flex-1 bg-white">
              <div className="min-w-0 flex-1 overflow-hidden pl-[3px]">
                <div className="flex h-[26px] items-center text-[15px] font-bold text-black">
                  <svg width="18" height="16" viewBox="0 0 18 16" fill="none" aria-hidden="true"><path d="M.8 15V3l2-2h5l1.500 2h7.500v12z" fill="#e0dc50" stroke="#6a6a30" strokeWidth="1.300" /><path d="M1 15.200h16.500V4" stroke="#222" strokeWidth="1.500" /></svg>
                  <span className="w-[103px] pl-[7px]">Simulation</span>
                  <span className="w-[9px]">-</span>
                  <span>LIN:iFilter 123.$FDOC</span>
                </div>
                {logLines.map((l) => (
                  <div key={l.text} className="flex h-[25px] items-center pl-[23px] text-sm whitespace-nowrap">
                    {l.kind === "info" ? <InfoMark /> : <WarnMark />}
                    <span className="w-[97px] pl-[6px]">{l.time}</span>
                    <span>{l.text}</span>
                  </div>
                ))}
              </div>
              <div className="flex w-5 shrink-0 flex-col items-center bg-[#f0f0f0] py-1">
                <Chev d={chUp} />
                <div className="mt-[5px] h-[21px] w-[19px] bg-[#cdcdcd]" />
                <div className="flex-1" />
                <Chev d={chDown} />
              </div>
            </div>
          </section>
        </main>
      </div>

      {/* lower toolbars */}
      <div className="flex h-[33px] shrink-0 gap-[5px] bg-gradient-to-r from-[#9dbcf3] via-[#b8d2fb] to-[#c4d7f5] pt-px pl-1">
        <Bar className="w-[149px]">
          <Grip />
          <Tool name="Align top">{icon.alignTop}</Tool><Caret /><Tool name="Align left">{icon.alignLeft}</Tool><Caret /><Tool name="Distribute">{icon.distrib}</Tool><Caret />
          <span className="w-2" /><Overflow />
        </Bar>
        <Bar className="w-[243px]">
          <Grip />
          <Tool name="Rectangle">{icon.rect}</Tool><Caret /><Tool name="Overlap">{icon.overlap}</Tool><Caret /><Tool name="Union">{icon.union}</Tool><Caret /><Tool name="Mirror">{icon.mirror}</Tool><Caret />
          <Tool name="Group">{icon.group}</Tool><Tool name="Ungroup">{icon.ungroup}</Tool><Overflow />
        </Bar>
        <Bar className="w-[183px]">
          <Grip />
          <Tool name="Rotate">{icon.rotate}</Tool><Sep /><Tool name="Array">{icon.array}</Tool><Caret /><Tool name="Snap">{icon.snap}</Tool><Caret /><Tool name="Disable snap">{icon.noSnap}</Tool><Caret />
          <span className="w-2" /><Overflow />
        </Bar>
      </div>

      {/* status bar */}
      <div className="flex h-6 shrink-0 items-center justify-end bg-[#eeeff1] pt-px pr-[5px] text-sm text-[#3a3a44]">
        <span className="h-full w-3 border-x border-[#d5d6da]" />
        <span className="flex h-full w-[85px] items-center justify-between border-r border-[#d5d6da] px-[6px]"><span>x :</span><span>-29.822</span></span>
        <span className="flex h-full w-[84px] items-center justify-between border-r border-[#d5d6da] px-[6px]"><span>y :</span><span>14.996</span></span>
        <span className="flex h-full w-10 items-center justify-center border-r border-[#d5d6da]">mm</span>
        <span className="pl-[7px]"><WarnMark /></span>
      </div>

      {/* taskbar */}
      <footer className="flex h-[50px] shrink-0 items-stretch bg-black text-white">
        <button aria-label="Start" className="flex w-[60px] items-center justify-center"><svg width="20" height="20" viewBox="0 0 20 20" fill="#fff"><path d="M0 3 8.500 1.700v7.800H0zM9.500 1.500 20 0v9.500H9.500zM0 10.500h8.500v7.800L0 17zM9.500 10.500H20V20L9.500 18.500z" /></svg></button>
        <button aria-label="Search" className="flex w-[60px] items-center justify-center"><svg width="22" height="22" viewBox="0 0 22 22" fill="none" stroke="#fff" strokeWidth="1.500"><circle cx="14" cy="7.500" r="6.300" /><path d="m9.500 12.500-8.500 8.500" /></svg></button>
        <button aria-label="Task view" className="mr-[3px] flex w-[60px] items-center justify-center"><svg width="26" height="20" viewBox="0 0 26 20" fill="none" stroke="#fff" strokeWidth="1.300"><path d="M5.500 1.500h15v17h-15zM3.500 4h-2.500v12h2.500M22.500 4h2.500v12h-2.500" /></svg></button>
        {apps.map((a) => (
          <button key={a.name} aria-label={a.name} className={a.line === "active" ? "flex w-[62px] flex-col items-center bg-[#333436]" : "flex w-[62px] flex-col items-center"}>
            <span className="flex flex-1 items-center">{a.icon}</span>
            {a.line === "full" && <span className="-mt-[3px] h-[3px] w-[51px] bg-[#e4fab4]" />}
            {a.line === "active" && <span className="-mt-[3px] h-[3px] w-full bg-[#e4fab4]" />}
            {a.line === "split" && <span className="-mt-[3px] flex h-[3px] w-[51px]"><span className="flex-1 bg-[#e4fab4]" /><span className="w-[11px] bg-[#a8b888]" /></span>}
          </button>
        ))}
        <div className="flex flex-1 items-center justify-end">
          <button aria-label="People"><svg width="20" height="20" viewBox="0 0 20 20" fill="none" stroke="#fff" strokeWidth="1.500"><circle cx="14" cy="4" r="3.200" /><circle cx="6" cy="10" r="3" /><path d="M1 19c0-7 10-7 10 0M10 9.500c4-3 9-1 9 4" /></svg></button>
          <button aria-label="Hidden icons" className="ml-[28px]"><svg width="16" height="10" viewBox="0 0 16 10" fill="none" stroke="#fff" strokeWidth="1.400"><path d="m1 9 7-7 7 7" /></svg></button>
          <button aria-label="Battery" className="ml-[12px]"><svg width="20" height="14" viewBox="0 0 20 14" fill="none"><path d="M5.500 4h12v8.500h-12z" fill="#fff" stroke="#fff" /><path d="M19 6.500v4" stroke="#fff" strokeWidth="2" /><path d="M1 0v3M4 0v3M0 3.500h5v2.500H0zM2.500 6v6H6" stroke="#fff" /></svg></button>
          <button aria-label="Wi-Fi" className="ml-[12px]"><svg width="17" height="17" viewBox="0 0 17 17" fill="none" stroke="#fff" strokeWidth="1.400"><path d="M1 14C2 6 8 1.500 16 2M5 15c1-5 5-8.500 11-8.500M9.500 15.500c.5-3 3-4.500 6.500-4.500" /><circle cx="14.500" cy="14.500" r="1.500" fill="#fff" /></svg></button>
          <button aria-label="Volume" className="ml-[10px]"><svg width="21" height="17" viewBox="0 0 21 17" fill="none" stroke="#fff" strokeWidth="1.300"><path d="M1 5.500h3.500l4.500-4v14l-4.500-4H1zM12 5.500c1.500 2 1.500 4 0 6M15 3.500c2.500 3 2.500 7 0 10M18 1.500c3.500 4 3.500 10 0 14" /></svg></button>
          <button className="ml-[13px] w-7 text-sm">РУС</button>
          <time className="ml-4 flex w-[72px] flex-col items-center text-sm leading-[22px]"><span>12:13</span><span>19.05.2018</span></time>
          <button aria-label="Notifications" className="relative mr-[15px] ml-[21px] h-[30px] w-[31px]">
            <svg width="21" height="20" viewBox="0 0 21 20" fill="none" aria-hidden="true"><path d="M.5.5h20v15h-13l-3 4v-4h-4z" fill="#fff" /><path d="M4 4.500h13M4 8h13M4 11.500h9" stroke="#000" strokeWidth="1.300" /></svg>
            <span className="absolute top-[10px] left-[10px] flex h-5 w-5 items-center justify-center rounded-full border border-[#888] bg-[#2c2c2e] text-xs font-bold">2</span>
          </button>
          <span className="h-full w-[6px] border-l border-[#555]" />
        </div>
      </footer>
    </div>
  );
}
